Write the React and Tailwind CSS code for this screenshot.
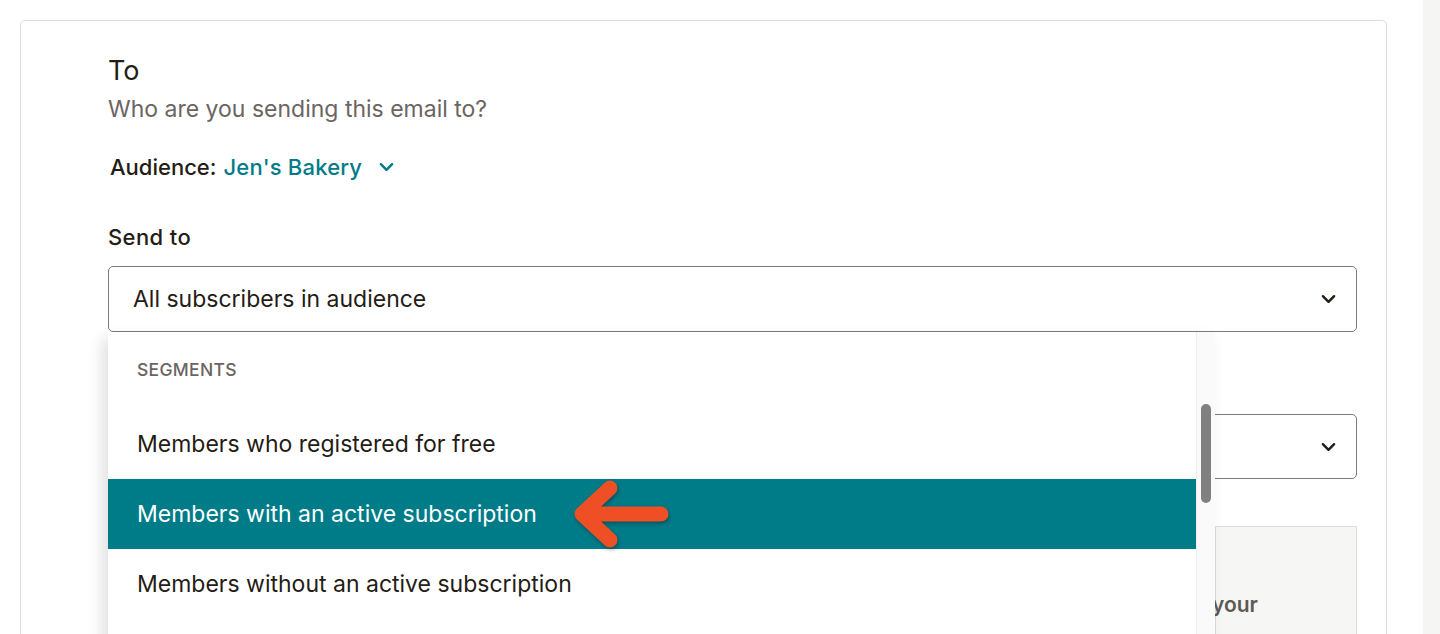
import React from 'react';

const Chevron = ({ className }) => (
  <svg viewBox="0 0 16 10" className={className} fill="none" stroke="currentColor" strokeWidth="2.6" strokeLinecap="round" strokeLinejoin="round">
    <path d="M2 2l6 6 6-6" />
  </svg>
);

const Arrow = () => (
  <svg width="130" height="90" viewBox="0 0 130 90" className="absolute left-[455px] top-[-10px]" style={{ filter: 'drop-shadow(1px 2px 2px rgba(0,0,0,0.35))' }}>
    <g fill="none" stroke="#ef4f25" strokeWidth="15" strokeLinecap="round" strokeLinejoin="round">
      <path d="M98 45H20" />
      <path d="M47 19L19 45l28 26" />
    </g>
  </svg>
);

const Option = ({ children, active }) => (
  <div className={`relative h-[70px] flex items-center pl-[29px] text-[23px] ${active ? 'bg-[#007c89] text-white' : 'text-[#241c15]'}`}>
    {children}
    {active && <Arrow />}
  </div>
);

export default function App() {
  return (
    <div className="flex h-[634px] overflow-hidden bg-white" style={{ fontFamily: 'Inter, "Open Sans", sans-serif' }}>
      <div className="w-[1423px] shrink-0 pl-5 pt-5">
        <div className="w-[1367px] h-[700px] border border-[#dcdcdc] rounded-[5px] pl-[87px] pr-[29px] pt-[34px]">
          <div className="text-[27px] leading-[32px] text-[#241c15]">To</div>
          <div className="mt-[7px] text-[23px] leading-[30px] text-[#6b6461]">Who are you sending this email to?</div>
          <div className="mt-[28px] flex items-center text-[22px] leading-[30px] font-medium">
            <span className="ml-[2px] text-[#241c15]">Audience:</span>
            <span className="ml-[7px] tracking-[0.2px] text-[#007c89]">Jen's Bakery</span>
            <Chevron className="ml-[17px] w-[15px] h-[10px] text-[#007c89]" />
          </div>
          <div className="mt-[40px] text-[22px] leading-[30px] font-medium tracking-[0.4px] text-[#241c15]">Send to</div>
          <div className="relative mt-[14px]">
            <div className="h-[66px] border border-[#7d7a77] rounded-[5px] flex items-center justify-between pl-[24px] pr-[20px] text-[23px] text-[#241c15]">
              <span>All subscribers in audience</span>
              <Chevron className="w-[15px] h-[10px] text-[#241c15]" />
            </div>
            <div className="mt-[82px] h-[65px] border border-[#7d7a77] rounded-[5px] flex items-center justify-end pr-[20px]">
              <Chevron className="w-[15px] h-[10px] text-[#241c15]" />
            </div>
            <div className="ml-auto mt-[47px] w-[142px] h-[200px] border border-[#dcdcdc] bg-[#f6f6f4] pt-[62px] text-[21px] font-semibold text-[#5e5955]">
              <span className="-ml-[4px]">your</span>
            </div>

            <div className="absolute left-0 top-[66px] w-[1107px] h-[320px] flex bg-white shadow-[-6px_6px_14px_rgba(0,0,0,0.12)]">
              <div className="flex-1">
                <div className="h-[77px] flex items-center pl-[29px] text-[17.5px] font-medium tracking-[0.3px] text-[#6b6461]">SEGMENTS</div>
                <Option>Members who registered for free</Option>
                <Option active>Members with an active subscription</Option>
                <Option>Members without an active subscription</Option>
              </div>
              <div className="w-[19px] bg-[#fafafa] border-l border-[#ededed] pt-[72px] flex justify-center">
                <div className="w-[10px] h-[99px] rounded-full bg-[#808080]" />
              </div>
            </div>
          </div>
        </div>
      </div>
      <div className="flex-1 bg-[#f5f5f4]" />
    </div>
  );
}
